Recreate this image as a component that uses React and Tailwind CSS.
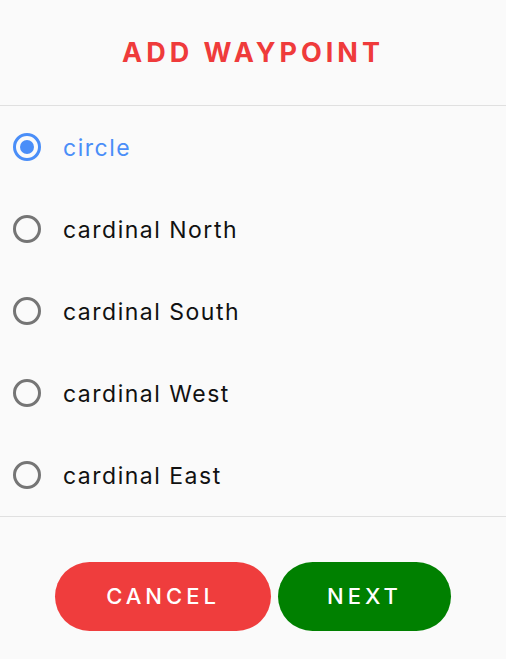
import React, { useState } from 'react';

const options = ['circle', 'cardinal North', 'cardinal South', 'cardinal West', 'cardinal East'];

const Radio = ({ checked }) => (
  <svg width="28" height="28" viewBox="0 0 28 28" className="shrink-0">
    <circle
      cx="14"
      cy="14"
      r="12.5"
      fill="none"
      stroke={checked ? '#4a8ef8' : '#757575'}
      strokeWidth="3"
    />
    {checked && <circle cx="14" cy="14" r="7" fill="#4a8ef8" />}
  </svg>
);

const App = () => {
  const [selected, setSelected] = useState(0);

  return (
    <div
      className="w-[506px] h-[659px] bg-[#fafafa] flex flex-col"
      style={{ fontFamily: '"Inter", "Noto Sans", sans-serif' }}
    >
      <div className="h-[106px] flex items-center justify-center border-b border-[#e0e0e0]">
        <h1 className="text-[27px] font-bold tracking-[4px] text-[#ef3b3b] pt-[2px]">ADD WAYPOINT</h1>
      </div>

      <div className="flex flex-col border-b border-[#e0e0e0]">
        {options.map((opt, i) => (
          <button
            key={opt}
            onClick={() => setSelected(i)}
            className="h-[82px] flex items-center pl-[13px] text-left"
          >
            <Radio checked={selected === i} />
            <span
              className={`ml-[22px] text-[23px] tracking-[1.5px] pt-[2px] ${
                selected === i ? 'text-[#4a8ef8]' : 'text-[#111111]'
              }`}
            >
              {opt}
            </span>
          </button>
        ))}
      </div>

      <div className="flex justify-center gap-[7px] pt-[45px]">
        <button className="w-[216px] h-[69px] rounded-full bg-[#ef3d3d] text-white text-[22px] font-medium tracking-[4px]">
          CANCEL
        </button>
        <button className="w-[173px] h-[69px] rounded-full bg-[#008000] text-white text-[22px] font-medium tracking-[4px]">
          NEXT
        </button>
      </div>
    </div>
  );
};

export default App;
